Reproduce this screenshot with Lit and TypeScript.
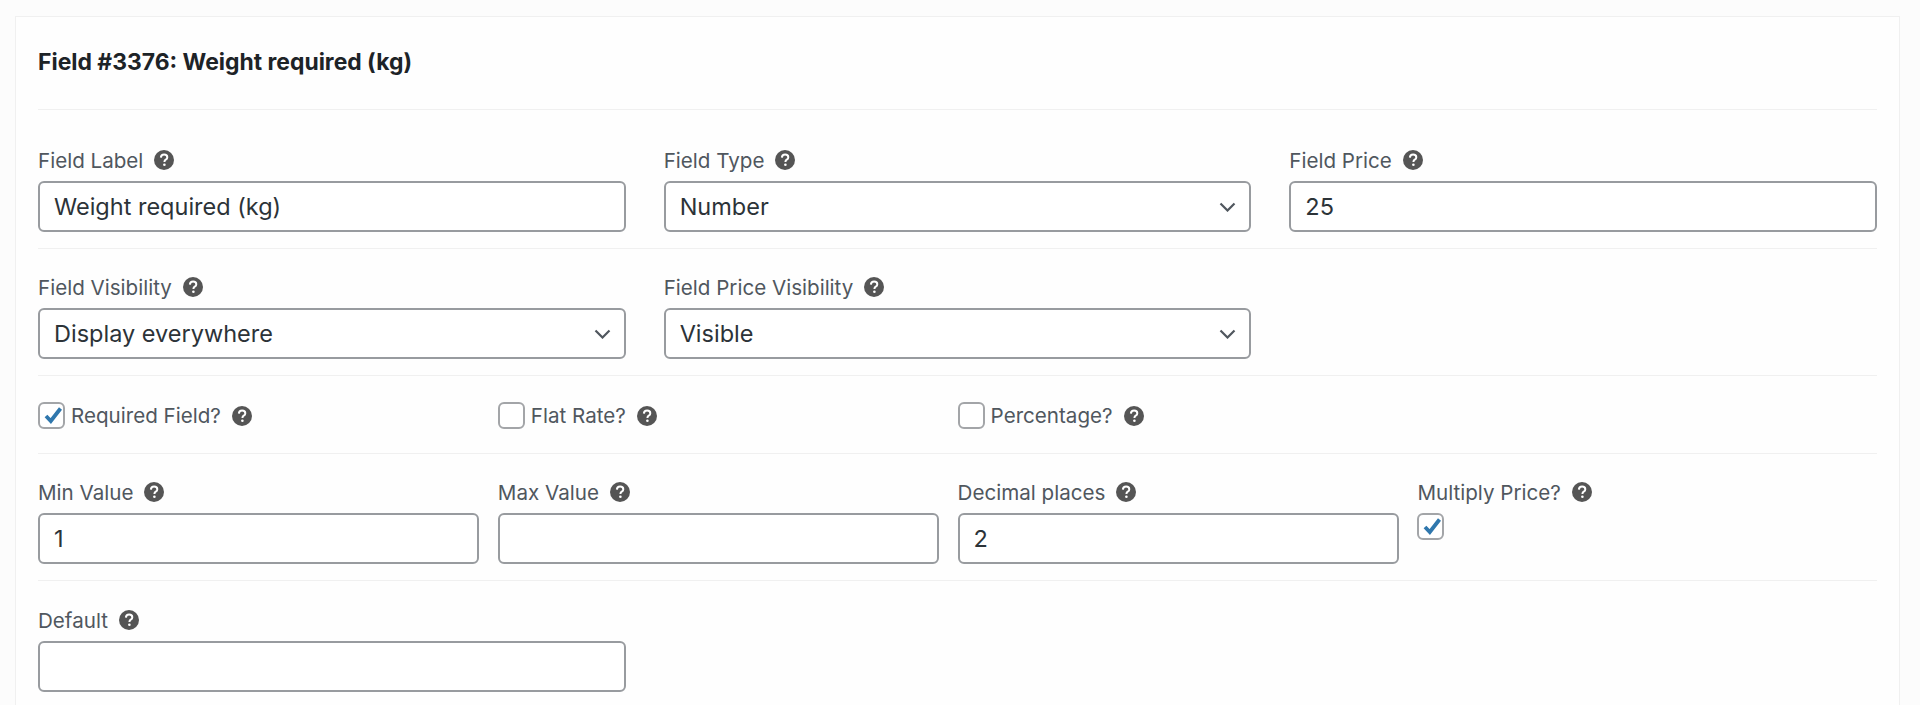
import { LitElement, html, css, svg } from "lit";
import { customElement } from "lit/decorators.js";

const help = html`<svg class="help" viewBox="0 0 20 20" aria-hidden="true"><circle cx="10" cy="10" r="10" fill="#555"/><path d="M6.9 7.6c.1-2 1.4-3.1 3.2-3.1 1.9 0 3.2 1.1 3.2 2.7 0 1.2-.6 1.9-1.6 2.5-.9.6-1.2 1-1.2 1.9v.4" fill="none" stroke="#fff" stroke-width="2"/><circle cx="10.4" cy="14.8" r="1.3" fill="#fff"/></svg>`;
const chevron = svg`<path d="M1.5 1.5 8.5 8.5 15.5 1.5" fill="none" stroke="#50575e" stroke-width="2.2"/>`;
const tick = svg`<path d="M6 12 10.8 17 20.5 4.5" fill="none" stroke="#2f77ad" stroke-width="3.8"/>`;

@customElement("app-root")
export class AppRoot extends LitElement {
  static styles = css`
    :host { display: block; height: 705px; overflow: hidden; background: #fcfcfc; font-family: Inter, "Liberation Sans", Arial, sans-serif; }
    .card { margin: 16px 20px 0 15px; padding: 0 22px 60px 22px; background: #fefefe; border: 1px solid #f0f0f0; }
    h1 { margin: 0; padding: 33px 0 35px; font-size: 22.9px; line-height: 24px; font-weight: 700; color: #1d2327; }
    .row { border-top: 1px solid #f0f0f0; display: grid; padding: 26px 0 16px; }
    .first { padding-top: 38px; }
    .three { grid-template-columns: repeat(3, 1fr); column-gap: 38px; }
    .four { grid-template-columns: repeat(4, 441px); column-gap: 18.8px; }
    .checks { padding: 26px 0 24px; }
    .last { padding-top: 27px; }
    .label { display: flex; align-items: center; gap: 11px; height: 24px; margin-bottom: 9px; font-size: 20.6px; color: #50575e; }
    .help { width: 20px; height: 20px; flex: none; }
    .input { display: flex; align-items: center; box-sizing: border-box; width: 100%; height: 51px; padding: 0 14px; font: 23.5px Inter, "Liberation Sans", Arial, sans-serif; color: #2c3338; background: #fff; border: 2px solid #989b9f; border-radius: 6px; }
    .select { appearance: none; cursor: pointer; }
    .wrap { position: relative; }
    .chev { position: absolute; right: 15px; top: 21px; width: 17px; height: 10px; pointer-events: none; }
    .check { display: flex; align-items: center; gap: 6px; height: 27px; font-size: 20.6px; color: #50575e; }
    .check .help { margin-left: 5px; }
    .box { display: block; width: 27px; height: 27px; flex: none; box-sizing: border-box; background: #fff; border: 2px solid #a3a5a8; border-radius: 6px; }
    .box svg { display: block; width: 100%; height: 100%; }
  `;

  private field(label: string, value = "") {
    return html`<div><div class="label">${label}${help}</div><input class="input" type="text" .value=${value} /></div>`;
  }
  private choice(label: string, value: string) {
    return html`<div><div class="label">${label}${help}</div><div class="wrap"><select class="input select"><option>${value}</option></select><svg class="chev" viewBox="0 0 17 10">${chevron}</svg></div></div>`;
  }
  private box(on: boolean) {
    return html`<span class="box">${on ? html`<svg viewBox="0 0 23 23">${tick}</svg>` : ""}</span>`;
  }
  private check(label: string, on: boolean) {
    return html`<div class="check">${this.box(on)}${label}${help}</div>`;
  }

  render() {
    return html`<div class="card">
      <h1>Field #3376: Weight required (kg)</h1>
      <div class="row three first">
        ${this.field("Field Label", "Weight required (kg)")}
        ${this.choice("Field Type", "Number")}
        ${this.field("Field Price", "25")}
      </div>
      <div class="row three">
        ${this.choice("Field Visibility", "Display everywhere")}
        ${this.choice("Field Price Visibility", "Visible")}
      </div>
      <div class="row four checks">
        ${this.check("Required Field?", true)}
        ${this.check("Flat Rate?", false)}
        ${this.check("Percentage?", false)}
      </div>
      <div class="row four">
        ${this.field("Min Value", "1")}
        ${this.field("Max Value")}
        ${this.field("Decimal places", "2")}
        <div><div class="label">Multiply Price?${help}</div>${this.box(true)}</div>
      </div>
      <div class="row three last">
        ${this.field("Default")}
      </div>
    </div>`;
  }
}
